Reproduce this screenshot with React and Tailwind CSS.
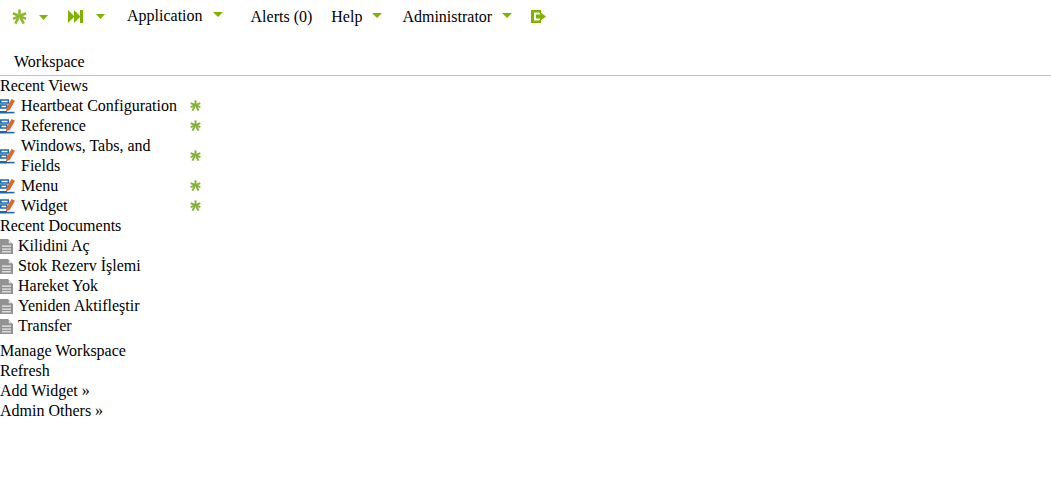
const GREEN = "#7fb300";

function Star({ size = 15, color = "#84b135" }) {
  return (
    <svg width={size} height={size} viewBox="0 0 16 16" className="block shrink-0">
      <g stroke={color} strokeWidth="2.8" strokeLinecap="butt">
        <line x1="8" y1="0.5" x2="8" y2="6" />
        <line x1="1" y1="4.5" x2="15" y2="10.5" />
        <line x1="15" y1="4.5" x2="1" y2="10.5" />
        <line x1="3.5" y1="15.5" x2="7" y2="9" />
        <line x1="12.5" y1="15.5" x2="9" y2="9" />
      </g>
    </svg>
  );
}

function Caret({ w = 10, h = 5 }) {
  return (
    <svg width={w} height={h} viewBox="0 0 10 5" className="block shrink-0" preserveAspectRatio="none">
      <polygon points="0,0 10,0 5,5" fill={GREEN} />
    </svg>
  );
}

function SkipIcon() {
  return (
    <svg width="15" height="13" viewBox="0 0 15 13" className="block shrink-0">
      <polygon points="0,0 6.5,6.5 0,13" fill={GREEN} />
      <polygon points="6,0 12.5,6.5 6,13" fill={GREEN} />
      <rect x="12" y="0" width="3" height="13" fill={GREEN} />
    </svg>
  );
}

function LogoutIcon() {
  return (
    <svg width="15" height="13" viewBox="0 0 15 13" className="block shrink-0">
      <path d="M0 0H10V3H8V2.5H3V10.5H8V10H10V13H0Z" fill={GREEN} />
      <polygon points="5,4.5 9,4.5 9,2 15,6.5 9,11 9,8.5 5,8.5" fill={GREEN} />
    </svg>
  );
}

function ViewIcon() {
  return (
    <svg width="15" height="15" viewBox="0 0 15 15" className="block shrink-0">
      <g fill="none" stroke="#1a68ad" strokeWidth="1.5">
        <rect x="0.8" y="1" width="7.5" height="3" />
        <rect x="0.8" y="6" width="6" height="3" />
      </g>
      <rect x="0" y="12" width="7" height="2.2" fill="#1a68ad" />
      <rect x="0" y="12.8" width="14.5" height="1.6" fill="#1a68ad" />
      <polygon points="11.5,0 15,1.8 9.8,10.8 6,12.5 6.6,8.5" fill="#e0662a" />
    </svg>
  );
}

function DocIcon() {
  return (
    <svg width="13" height="15" viewBox="0 0 13 15" className="block shrink-0">
      <path d="M0 0H8L13 5V15H0Z" fill="#929292" />
      <path d="M8.8 0.8L12.2 4.2H8.8Z" fill="#e6e6e6" />
      <rect x="2" y="6.5" width="9" height="1.2" fill="#f0f0f0" />
      <rect x="2" y="9.5" width="9" height="1.2" fill="#f0f0f0" />
      <rect x="2" y="12.2" width="9" height="1.2" fill="#f0f0f0" />
    </svg>
  );
}

const views = ["Heartbeat Configuration", "Reference", "Windows, Tabs, and Fields", "Menu", "Widget"];
const docs = ["Kilidini Aç", "Stok Rezerv İşlemi", "Hareket Yok", "Yeniden Aktifleştir", "Transfer"];

export default function App() {
  return (
    <div className="h-[487px] overflow-hidden bg-white text-[16px] leading-5 text-black font-['Liberation_Serif',serif]">
      <nav className="flex h-[34px] items-start pt-[6px]">
        <div className="ml-[12px] pt-[3px]"><Star size={15} color="#8cb92f" /></div>
        <div className="ml-[12px] pt-[9px]"><Caret w={9} /></div>
        <div className="ml-[20px] pt-[4px]"><SkipIcon /></div>
        <div className="ml-[13px] pt-[8px]"><Caret w={9} /></div>
        <span className="ml-[22px]">Application</span>
        <div className="ml-[10px] pt-[6px]"><Caret /></div>
        <span className="ml-[28px] mt-[1px]">Alerts (0)</span>
        <span className="ml-[19px] mt-[1px]">Help</span>
        <div className="ml-[10px] pt-[7px]"><Caret /></div>
        <span className="ml-[20px] mt-[1px]">Administrator</span>
        <div className="ml-[10px] pt-[7px]"><Caret /></div>
        <div className="ml-[19px] pt-[4px]"><LogoutIcon /></div>
      </nav>
      <div className="h-[42px] border-b border-[#c4c4c4] pl-[14px] pt-[18px]">Workspace</div>
      <div>Recent Views</div>
      <ul>
        {views.map((v) => (
          <li key={v} className="flex w-[201px] items-center">
            <ViewIcon />
            <span className="ml-[6px] w-[169px] shrink-0">{v}</span>
            <div className="mb-[2px]"><Star size={11} /></div>
          </li>
        ))}
      </ul>
      <div>Recent Documents</div>
      <ul>
        {docs.map((d) => (
          <li key={d} className="flex items-center">
            <DocIcon />
            <span className="ml-[5px]">{d}</span>
          </li>
        ))}
      </ul>
      <div className="mt-[5px]">
        <div>Manage Workspace</div>
        <div>Refresh</div>
        <div>Add Widget »</div>
        <div>Admin Others »</div>
      </div>
    </div>
  );
}
